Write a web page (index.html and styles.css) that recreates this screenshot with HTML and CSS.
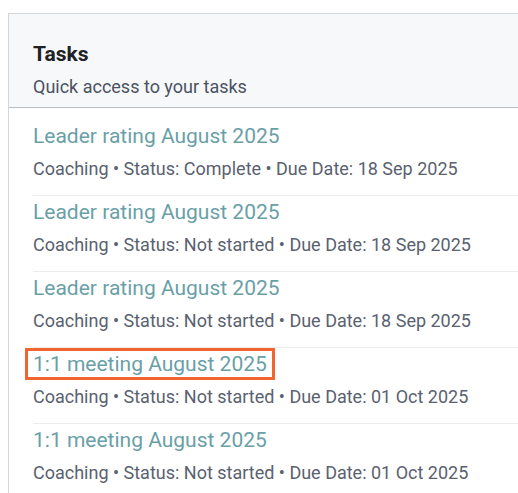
FILE: index.html
```html
<!DOCTYPE html>
<html lang="en">
<head>
<meta charset="utf-8">
<title>Tasks</title>
<link rel="stylesheet" href="styles.css">
</head>
<body>
<section class="card">
  <header class="card-header">
    <h2 class="card-title">Tasks</h2>
    <p class="card-subtitle">Quick access to your tasks</p>
  </header>
  <ul class="task-list">
    <li class="task">
      <a class="task-title" href="#">Leader rating August 2025</a>
      <div class="task-meta">Coaching • Status: Complete • Due Date: 18 Sep 2025</div>
    </li>
    <li class="task">
      <a class="task-title" href="#">Leader rating August 2025</a>
      <div class="task-meta">Coaching • Status: Not started • Due Date: 18 Sep 2025</div>
    </li>
    <li class="task">
      <a class="task-title" href="#">Leader rating August 2025</a>
      <div class="task-meta">Coaching • Status: Not started • Due Date: 18 Sep 2025</div>
    </li>
    <li class="task">
      <a class="task-title focused" href="#">1:1 meeting August 2025</a>
      <div class="task-meta">Coaching • Status: Not started • Due Date: 01 Oct 2025</div>
    </li>
    <li class="task">
      <a class="task-title" href="#">1:1 meeting August 2025</a>
      <div class="task-meta">Coaching • Status: Not started • Due Date: 01 Oct 2025</div>
    </li>
  </ul>
</section>
</body>
</html>
```
FILE: styles.css
```css
html, body {
  height: 100%;
}
body {
  margin: 0;
  padding: 13px 0 0 8px;
  box-sizing: border-box;
  overflow: hidden;
  background: #ffffff;
  font-family: Roboto, "Noto Sans", Arial, sans-serif;
}
.card {
  width: 510px;
  height: 480px;
  box-sizing: border-box;
  overflow: hidden;
  border-top: 1px solid #d3d6da;
  border-left: 1px solid #d3d6da;
  background: #ffffff;
}
.card-header {
  background: #f7f8fa;
  border-bottom: 1px solid #b9bec4;
  padding: 28px 24px 9px;
}
.card-title {
  margin: 0;
  font-size: 21px;
  line-height: 24px;
  font-weight: 700;
  color: #202124;
}
.card-subtitle {
  margin: 10px 0 0;
  font-size: 18px;
  line-height: 22px;
  color: #4b5261;
}
.task-list {
  list-style: none;
  margin: 0;
  padding: 12px 0 0 24px;
}
.task {
  padding: 4px 0 14px;
  border-top: 1px solid #ececec;
}
.task:first-child {
  border-top: none;
}
.task-title {
  display: inline-block;
  font-size: 21px;
  line-height: 24px;
  color: #6a9fa8;
  text-decoration: none;
}
.task-title.focused {
  border: 3px solid #f26430;
  padding: 1px 5px;
  margin: -4px -8px;
}
.task-meta {
  margin-top: 9px;
  font-size: 18px;
  line-height: 24px;
  color: #5a6170;
  white-space: nowrap;
}
```
